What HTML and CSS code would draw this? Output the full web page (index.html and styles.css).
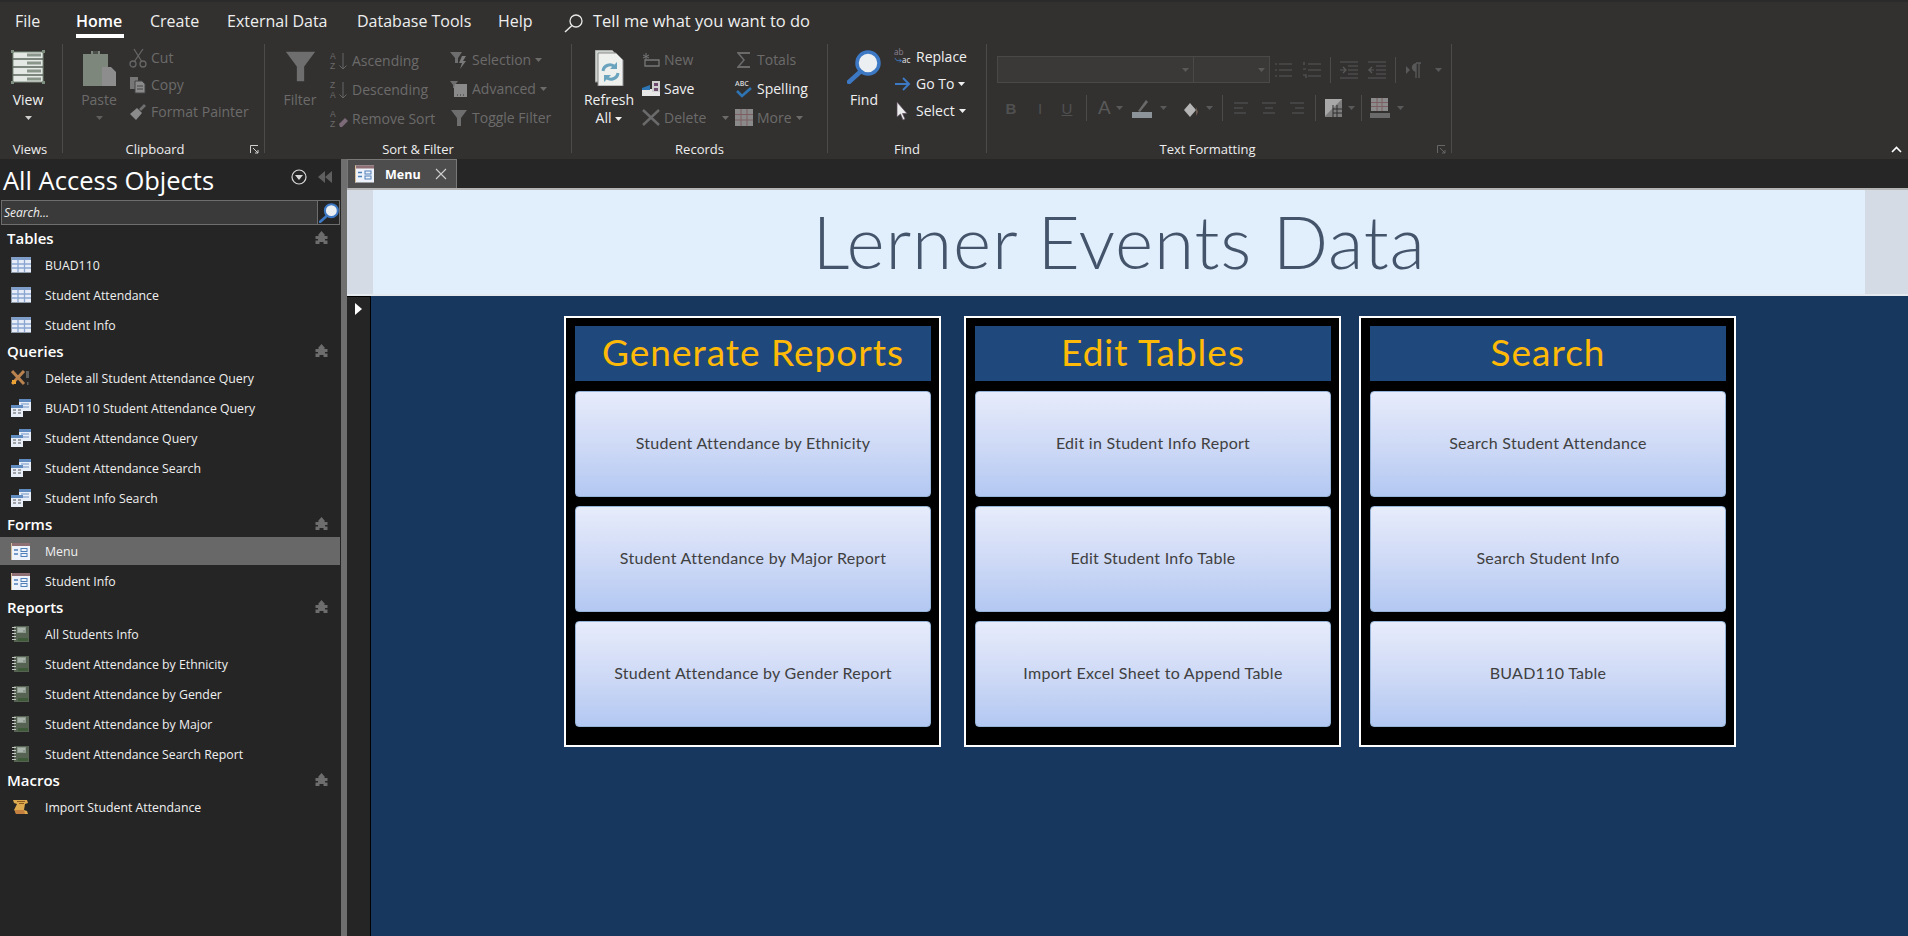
FILE: index.html
```html
<!doctype html>
<html>
  <head>
    <meta charset="utf-8">
    <title>Lerner Events Data</title>
    <link rel="stylesheet" href="styles.css">
  </head>
  <body>
    <svg class="defs" width="0" height="0">
      <symbol id="i-table" viewBox="0 0 20 16">
        <rect x="0" y="0" width="20" height="16" fill="#8f9aa8"/>
        <rect x="1" y="0" width="19" height="15" fill="#e6edf8"/>
        <rect x="1" y="0" width="19" height="3" fill="#7f9fca"/>
        <path d="M1 7h19M1 11h19M7 3v12M13.500 3v12" stroke="#8aa6d0" stroke-width="1.300"/>
      </symbol>
      <symbol id="i-query" viewBox="0 0 20 18">
        <rect x="8" y="0" width="12" height="12" fill="#e8eef8"/>
        <rect x="8" y="0" width="12" height="3" fill="#5f8bc0"/>
        <path d="M10 5h8M10 8h8" stroke="#6f93c4"/>
        <rect x="0" y="6" width="12" height="12" fill="#e8eef8"/>
        <rect x="0" y="6" width="12" height="3" fill="#5f8bc0"/>
        <path d="M2 11h3M7 11h3M2 14h3M7 14h3" stroke="#555"/>
      </symbol>
      <symbol id="i-delete" viewBox="0 0 20 16">
        <path d="M1 1l12 13M13 1L1 14" stroke="#b9824e" stroke-width="3"/>
        <rect x="1" y="10" width="4" height="4" fill="#e9a233"/>
        <path d="M15 1h3v7h-3zM16 12h1.500v3H16z" fill="#5f5f5f"/>
      </symbol>
      <symbol id="i-form" viewBox="0 0 20 17">
        <rect x="0" y="0" width="19" height="17" fill="#eef3fb"/>
        <rect x="0" y="0" width="19" height="3" fill="#8d6f74"/>
        <path d="M.5 0v17" stroke="#d9c09c"/>
        <path d="M3 7h4M3 11h4" stroke="#4f7fb8" stroke-width="1.500"/>
        <rect x="10" y="5.500" width="6" height="3" fill="none" stroke="#4f7fb8"/>
        <rect x="10" y="10.500" width="6" height="3" fill="none" stroke="#4f7fb8"/>
      </symbol>
      <symbol id="i-report" viewBox="0 0 18 16">
        <rect x="2" y="0" width="15" height="16" fill="#566252"/>
        <rect x="5" y="1" width="9" height="6" fill="#8f9b90"/>
        <path d="M6 3h7M6 5h5" stroke="#c5cdc5"/>
        <rect x="6" y="12" width="10" height="3" fill="#3f5a38"/>
        <path d="M0 1.500h4M0 4.500h4M0 7.500h4M0 10.500h4M0 13.500h4" stroke="#c5c5c5"/>
      </symbol>
      <symbol id="i-macro" viewBox="0 0 16 16">
        <path d="M0 1h14l1 3-3 1-1 6 3 1 1 3H3l-1-3-1-1 3-6-3-1z" fill="#dca94f"/>
        <path d="M4 2.500h8M6 4.500h5" stroke="#8c5a1e"/>
        <path d="M2 11h9l1 4H3z" fill="#c4803f"/>
      </symbol>
      <symbol id="i-pin" viewBox="0 0 13 13">
        <path d="M6.500 0L10 4 9 5h3.500v3H10v1.500h2.500V13h-4v-2h-4v2H.5V9.500H3V8H.5V5H4L3 4z" fill="#6d6d6d"/>
      </symbol>
      <symbol id="i-glass" viewBox="0 0 34 34">
        <circle cx="21" cy="13" r="11" fill="#eceff2" stroke="#3c78c3" stroke-width="3.500"/>
        <path d="M13 22L2 32" stroke="#3c78c3" stroke-width="4.500" stroke-linecap="round"/>
      </symbol>
      <symbol id="i-funnel" viewBox="0 0 18 18">
        <path d="M1 1h16l-6 8v8H7V9z" fill="currentColor"/>
      </symbol>
      <symbol id="i-caret" viewBox="0 0 7 4">
        <path d="M0 0h7L3.500 4z" fill="currentColor"/>
      </symbol>
    </svg>

    <header class="ribbon">
      <nav class="tabs">
        <a class="tab tab-file">File</a>
        <a class="tab tab-home">Home</a>
        <a class="tab tab-create">Create</a>
        <a class="tab tab-external">External Data</a>
        <a class="tab tab-db">Database Tools</a>
        <a class="tab tab-help">Help</a>
        <svg class="tell-icon" width="20" height="20" viewBox="0 0 20 20"><circle cx="12" cy="8" r="6" fill="none" stroke="#e8e8e8" stroke-width="1.300"/><path d="M8 12.500L1 19" stroke="#e8e8e8" stroke-width="1.500"/></svg>
        <span class="tell">Tell me what you want to do</span>
      </nav>

      <div class="groups">
        <section class="group group-views">
          <div class="group-body">
            <div class="big big-view">
              <svg width="34" height="34" viewBox="0 0 34 34">
                <path d="M2 2h30v30H2z" fill="#e4e8e4" stroke="#7f8f7f" stroke-width="1"/>
                <rect x="0" y="0" width="3" height="3" fill="#7f8f7f"/><rect x="31" y="0" width="3" height="3" fill="#7f8f7f"/>
                <rect x="0" y="31" width="3" height="3" fill="#7f8f7f"/><rect x="31" y="31" width="3" height="3" fill="#7f8f7f"/>
                <path d="M2 9h30M2 17h30M2 25h30" stroke="#596659" stroke-width="1.500"/>
                <path d="M16 5h14M16 13h14M16 21h14M16 29h14" stroke="#8b968b" stroke-width="3"/>
              </svg>
              <span>View</span>
              <svg class="caret caret-big" width="7" height="4"><use href="#i-caret"/></svg>
            </div>
          </div>
          <div class="group-label">Views</div>
        </section>

        <section class="group group-clip">
          <div class="group-body off">
            <div class="big big-paste">
              <svg width="34" height="36" viewBox="0 0 34 36">
                <path d="M1 4h8V1h9v3h8v33H1z" fill="#7d877b"/>
                <rect x="11" y="1" width="5" height="3" fill="#4b514a"/>
                <path d="M20 17h9l5 5v14H20z" fill="#8d8d8d"/>
              </svg>
              <span>Paste</span>
              <svg class="caret caret-big" width="7" height="4"><use href="#i-caret"/></svg>
            </div>
            <div class="col col-clip">
              <div class="tool">
                <svg width="18" height="20" viewBox="0 0 18 20"><path d="M5 1l8 13M14 1L5 14" stroke="#666" stroke-width="1.300" fill="none"/><circle cx="4" cy="16" r="3" fill="none" stroke="#666" stroke-width="1.300"/><circle cx="14" cy="16" r="3" fill="none" stroke="#666" stroke-width="1.300"/></svg>
                <span>Cut</span>
              </div>
              <div class="tool">
                <svg width="18" height="18" viewBox="0 0 18 18"><path d="M1 1h8v12H1z" fill="#777"/><path d="M6 5h7l3 3v9H6z" fill="#8b8b8b" stroke="#444"/><path d="M8 10h6M8 13h6" stroke="#444"/></svg>
                <span>Copy</span>
              </div>
              <div class="tool">
                <svg width="18" height="18" viewBox="0 0 18 18"><path d="M1 11l7-6 5 5-6 7z" fill="#8b8b8b"/><path d="M10 6l5-5 2 2-5 5z" fill="#6f6f6f"/></svg>
                <span>Format Painter</span>
              </div>
            </div>
          </div>
          <div class="group-label">Clipboard</div>
          <svg class="launcher" width="9" height="9" viewBox="0 0 9 9"><path d="M.5 8V.5H8M3 3l5 5M8 5v3H5" stroke="#cfcfcf" fill="none"/></svg>
        </section>

        <section class="group group-sort">
          <div class="group-body off">
            <div class="big big-filter">
              <svg class="funnel-big" width="33" height="33"><use href="#i-funnel"/></svg>
              <span>Filter</span>
            </div>
            <div class="col col-sort">
              <div class="tool">
                <svg width="18" height="20" viewBox="0 0 18 20"><text x="0" y="8" class="az">A</text><text x="0" y="18" class="az">Z</text><path d="M13 2v16M9.500 14.500L13 18l3.500-3.500" stroke="#666" fill="none"/></svg>
                <span>Ascending</span>
              </div>
              <div class="tool">
                <svg width="18" height="20" viewBox="0 0 18 20"><text x="0" y="8" class="az">Z</text><text x="0" y="18" class="az">A</text><path d="M13 2v16M9.500 14.500L13 18l3.500-3.500" stroke="#666" fill="none"/></svg>
                <span>Descending</span>
              </div>
              <div class="tool">
                <svg width="18" height="20" viewBox="0 0 18 20"><text x="0" y="8" class="az">A</text><text x="0" y="18" class="az">Z</text><path d="M9 15l6-6 3 3-6 6h-2z" fill="#7d6a78"/></svg>
                <span>Remove Sort</span>
              </div>
            </div>
            <div class="col col-sort2">
              <div class="tool">
                <svg width="18" height="18" viewBox="0 0 18 18"><path d="M0 1h12L8 7v5H5V7z" fill="#6e6e6e"/><path d="M12 5h4l-3 5h3l-6 8 2-6H9z" fill="#7a7a7a"/></svg>
                <span>Selection</span><svg class="caret" width="7" height="4"><use href="#i-caret"/></svg>
              </div>
              <div class="tool">
                <svg width="18" height="18" viewBox="0 0 18 18"><path d="M0 1h8L5 5v3H3V5z" fill="#6e6e6e"/><path d="M5 4h12v13H4V8z" fill="#8a8a8a"/><path d="M7 15h1M10 15h1M13 15h1" stroke="#333"/></svg>
                <span>Advanced</span><svg class="caret" width="7" height="4"><use href="#i-caret"/></svg>
              </div>
              <div class="tool">
                <svg class="funnel-small" width="18" height="18"><use href="#i-funnel"/></svg>
                <span>Toggle Filter</span>
              </div>
            </div>
          </div>
          <div class="group-label">Sort &amp; Filter</div>
        </section>

        <section class="group group-records">
          <div class="group-body">
            <div class="big big-refresh">
              <svg width="29" height="36" viewBox="0 0 29 36">
                <path d="M0 0h17l4 4v28H0z" fill="#cfd3cf" stroke="#8a8a8a"/>
                <path d="M3 3h18l7 7v26H3z" fill="#eef0ee" stroke="#8a8a8a"/>
                <path d="M8 21a7 7 0 0 1 12-4M23 23a7 7 0 0 1-12 4" stroke="#6aa3bd" stroke-width="3" fill="none"/>
                <path d="M22 12v7h-7zM9 32v-7h7z" fill="#6aa3bd"/>
              </svg>
              <span>Refresh</span>
              <span>All<svg class="caret caret-on" width="7" height="4"><use href="#i-caret"/></svg></span>
            </div>
            <div class="col col-rec">
              <div class="tool off">
                <svg width="18" height="14" viewBox="0 0 18 14"><path d="M4 0v7M1 2l6 3M7 2L1 5" stroke="#777"/><path d="M3 7h14v6H3z" fill="none" stroke="#777" stroke-width="1.300"/></svg>
                <span>New</span>
              </div>
              <div class="tool">
                <svg width="18" height="15" viewBox="0 0 18 15"><rect x="0" y="8" width="18" height="7" fill="#e6e6e6"/><path d="M0 7l8-3v5H0z" fill="#2e75b6"/><rect x="10" y="0" width="8" height="11" fill="#d0d0d0"/><rect x="12" y="2" width="4" height="3" fill="#6d4a6d"/><rect x="12" y="7" width="4" height="3" fill="#6d4a6d"/></svg>
                <span>Save</span>
              </div>
              <div class="tool off">
                <svg width="18" height="17" viewBox="0 0 18 17"><path d="M1 1l16 15M17 1L1 16" stroke="#6a6a6a" stroke-width="2.500"/></svg>
                <span>Delete</span><svg class="caret caret-gap" width="7" height="4"><use href="#i-caret"/></svg>
              </div>
            </div>
            <div class="col col-rec2">
              <div class="tool off">
                <svg width="18" height="16" viewBox="0 0 18 16"><path d="M15 2V0H2v1l6 7-6 7v1h13v-2H5l5-6-5-6z" fill="#6a6a6a"/></svg>
                <span>Totals</span>
              </div>
              <div class="tool">
                <svg width="18" height="18" viewBox="0 0 18 18"><text x="0" y="6" class="abc">ABC</text><path d="M2 11l5 5 9-8" stroke="#2e75b6" stroke-width="2.500" fill="none"/></svg>
                <span>Spelling</span>
              </div>
              <div class="tool off">
                <svg width="18" height="17" viewBox="0 0 18 17"><rect width="18" height="17" fill="#8a8a8a"/><path d="M0 5.500h18M0 11h18M6 0v17M12 0v17" stroke="#7d5f63"/></svg>
                <span>More</span><svg class="caret" width="7" height="4"><use href="#i-caret"/></svg>
              </div>
            </div>
          </div>
          <div class="group-label">Records</div>
        </section>

        <section class="group group-find">
          <div class="group-body">
            <div class="big big-find">
              <svg width="34" height="34"><use href="#i-glass"/></svg>
              <span>Find</span>
            </div>
            <div class="col col-find">
              <div class="tool">
                <svg width="20" height="18" viewBox="0 0 20 18"><text x="0" y="7" class="ab">ab</text><text x="9" y="16" class="ab ab-on">ac</text><path d="M1 10l2 3h5M6 11l2 2-2 2" stroke="#3c78c3" fill="none"/></svg>
                <span>Replace</span>
              </div>
              <div class="tool">
                <svg width="18" height="14" viewBox="0 0 18 14"><path d="M1 7h14M9 1l6 6-6 6" stroke="#3c78c3" stroke-width="2" fill="none"/></svg>
                <span>Go To</span><svg class="caret caret-on" width="7" height="4"><use href="#i-caret"/></svg>
              </div>
              <div class="tool">
                <svg width="18" height="18" viewBox="0 0 18 18"><path d="M3 0v15l3.500-3 2.500 6 2-1-2.500-5.500H13z" fill="#ececec" stroke="#5a4a5a" stroke-width=".7"/></svg>
                <span>Select</span><svg class="caret caret-on" width="7" height="4"><use href="#i-caret"/></svg>
              </div>
            </div>
          </div>
          <div class="group-label">Find</div>
        </section>

        <section class="group group-text">
          <div class="group-body fmt">
            <div class="fmt-row fmt-top">
              <div class="combo combo-font"><svg class="caret" width="7" height="4"><use href="#i-caret"/></svg></div>
              <div class="combo combo-size"><svg class="caret" width="7" height="4"><use href="#i-caret"/></svg></div>
              <svg class="glyph g-list" width="18" height="18" viewBox="0 0 18 18"><path d="M4 3h13M4 9h13M4 15h13M0 3h2M0 9h2M0 15h2" stroke="#595959" stroke-width="1.200"/></svg>
              <svg class="glyph g-list2" width="18" height="18" viewBox="0 0 18 18"><path d="M5 3h13M5 9h13M5 15h13M1 1v3M0 8h3M0 14h3v3" stroke="#595959" stroke-width="1.200" fill="none"/></svg>
              <i class="sep sep-a"></i>
              <svg class="glyph g-in" width="18" height="18" viewBox="0 0 18 18"><path d="M0 1h18M8 5h10M8 9h10M8 13h10M0 17h18M0 9h6M3 6l3 3-3 3" stroke="#595959" stroke-width="1.200" fill="none"/></svg>
              <svg class="glyph g-out" width="18" height="18" viewBox="0 0 18 18"><path d="M0 1h18M8 5h10M8 9h10M8 13h10M0 17h18M0 9h6M4 6L1 9l3 3" stroke="#595959" stroke-width="1.200" fill="none"/></svg>
              <i class="sep sep-b"></i>
              <svg class="glyph g-para" width="16" height="16" viewBox="0 0 16 16"><path d="M0 4l4 4-4 4z" fill="#595959"/><path d="M10 1h5M10 1v15M13 1v15M10 2a3 3 0 0 0 0 7" stroke="#595959" stroke-width="1.300" fill="#595959"/></svg>
              <svg class="caret caret-para" width="7" height="4"><use href="#i-caret"/></svg>
            </div>
            <div class="fmt-row fmt-bottom">
              <b class="letter l-b">B</b>
              <em class="letter l-i">I</em>
              <u class="letter l-u">U</u>
              <i class="sep sep-c"></i>
              <span class="letter l-a">A</span>
              <svg class="caret caret-a" width="7" height="4"><use href="#i-caret"/></svg>
              <svg class="glyph g-hl" width="20" height="20" viewBox="0 0 20 20"><path d="M6 13L14 2l2 2-8 10z" fill="#6a6a6a"/><rect y="14" width="20" height="6" fill="#8d9499"/></svg>
              <svg class="caret caret-hl" width="7" height="4"><use href="#i-caret"/></svg>
              <svg class="glyph g-fill" width="16" height="19" viewBox="0 0 16 19"><path d="M8 4l6 7-6 7-6-7z" fill="#b5b5b5"/><path d="M14 8l2 5-2 4z" fill="#6a5a50"/></svg>
              <svg class="caret caret-fill" width="7" height="4"><use href="#i-caret"/></svg>
              <i class="sep sep-d"></i>
              <svg class="glyph g-al" width="14" height="12" viewBox="0 0 14 12"><path d="M0 1h14M0 6h9M0 11h12" stroke="#595959" stroke-width="1.200"/></svg>
              <svg class="glyph g-al2" width="14" height="12" viewBox="0 0 14 12"><path d="M0 1h14M3 6h8M1 11h12" stroke="#595959" stroke-width="1.200"/></svg>
              <svg class="glyph g-al3" width="14" height="12" viewBox="0 0 14 12"><path d="M0 1h14M5 6h9M2 11h12" stroke="#595959" stroke-width="1.200"/></svg>
              <i class="sep sep-e"></i>
              <svg class="glyph g-grid" width="17" height="18" viewBox="0 0 17 18"><path d="M0 0h17v18H0z" fill="#7d7d7d"/><path d="M17 0L0 17V0z" fill="#a8a8a8"/><path d="M8 10h9M8 14h9M8 6v12M12 6v12" stroke="#2f2f2f"/></svg>
              <svg class="caret caret-grid" width="7" height="4"><use href="#i-caret"/></svg>
              <i class="sep sep-f"></i>
              <svg class="glyph g-alt" width="20" height="20" viewBox="0 0 20 20"><rect x="1" y="0" width="17" height="13" fill="#8b8b8b"/><path d="M1 4.500h17M1 8.500h17M7 0v13M12 0v13" stroke="#7d5f63"/><rect y="15" width="20" height="5" fill="#6a6a6a"/></svg>
              <svg class="caret caret-alt" width="7" height="4"><use href="#i-caret"/></svg>
            </div>
          </div>
          <div class="group-label">Text Formatting</div>
          <svg class="launcher launcher-dim" width="9" height="9" viewBox="0 0 9 9"><path d="M.5 8V.5H8M3 3l5 5M8 5v3H5" stroke="#666" fill="none"/></svg>
        </section>
      </div>

      <svg class="collapse" width="11" height="7" viewBox="0 0 11 7"><path d="M1 6l4.500-4.500L10 6" stroke="#fff" stroke-width="1.600" fill="none"/></svg>
    </header>

    <div class="work">
      <aside class="nav">
        <div class="nav-title">
          <h1>All Access Objects</h1>
          <svg class="nav-drop" width="16" height="16" viewBox="0 0 16 16"><circle cx="8" cy="8" r="7" fill="none" stroke="#d8d8d8" stroke-width="1.200"/><path d="M4 6h8l-4 5z" fill="#d8d8d8"/></svg>
          <svg class="nav-shut" width="14" height="12" viewBox="0 0 14 12"><path d="M7 0v12L0 6zM14 0v12L7 6z" fill="#5f5f5f"/></svg>
        </div>
        <div class="nav-search">
          <span>Search...</span>
          <div class="nav-search-btn"><svg width="20" height="20"><use href="#i-glass"/></svg></div>
        </div>

        <h2 class="nav-head">Tables<svg width="13" height="13"><use href="#i-pin"/></svg></h2>
        <ul>
          <li><svg width="20" height="16"><use href="#i-table"/></svg>BUAD110</li>
          <li><svg width="20" height="16"><use href="#i-table"/></svg>Student Attendance</li>
          <li><svg width="20" height="16"><use href="#i-table"/></svg>Student Info</li>
        </ul>

        <h2 class="nav-head">Queries<svg width="13" height="13"><use href="#i-pin"/></svg></h2>
        <ul>
          <li><svg width="20" height="16"><use href="#i-delete"/></svg>Delete all Student Attendance Query</li>
          <li><svg width="20" height="18"><use href="#i-query"/></svg>BUAD110 Student Attendance Query</li>
          <li><svg width="20" height="18"><use href="#i-query"/></svg>Student Attendance Query</li>
          <li><svg width="20" height="18"><use href="#i-query"/></svg>Student Attendance Search</li>
          <li><svg width="20" height="18"><use href="#i-query"/></svg>Student Info Search</li>
        </ul>

        <h2 class="nav-head">Forms<svg width="13" height="13"><use href="#i-pin"/></svg></h2>
        <ul>
          <li class="current"><svg width="20" height="17"><use href="#i-form"/></svg>Menu</li>
          <li><svg width="20" height="17"><use href="#i-form"/></svg>Student Info</li>
        </ul>

        <h2 class="nav-head">Reports<svg width="13" height="13"><use href="#i-pin"/></svg></h2>
        <ul>
          <li><svg width="18" height="16"><use href="#i-report"/></svg>All Students Info</li>
          <li><svg width="18" height="16"><use href="#i-report"/></svg>Student Attendance by Ethnicity</li>
          <li><svg width="18" height="16"><use href="#i-report"/></svg>Student Attendance by Gender</li>
          <li><svg width="18" height="16"><use href="#i-report"/></svg>Student Attendance by Major</li>
          <li><svg width="18" height="16"><use href="#i-report"/></svg>Student Attendance Search Report</li>
        </ul>

        <h2 class="nav-head">Macros<svg width="13" height="13"><use href="#i-pin"/></svg></h2>
        <ul>
          <li><svg width="16" height="16"><use href="#i-macro"/></svg>Import Student Attendance</li>
        </ul>
      </aside>

      <div class="splitter"></div>

      <main class="doc">
        <div class="doc-tabs">
          <div class="doc-tab">
            <svg width="20" height="18"><use href="#i-form"/></svg>
            <span>Menu</span>
            <svg class="doc-close" width="12" height="12" viewBox="0 0 12 12"><path d="M1 1l10 10M11 1L1 11" stroke="#d0d0d0" stroke-width="1.100"/></svg>
          </div>
        </div>

        <div class="form-header">
          <div class="form-title">Lerner Events Data</div>
        </div>

        <div class="form-detail">
          <div class="selector"><svg width="7" height="12" viewBox="0 0 7 12"><path d="M0 0l7 6-7 6z" fill="#fff"/></svg></div>
          <div class="canvas">
            <section class="panel">
              <h2>Generate Reports</h2>
              <button>Student Attendance by Ethnicity</button>
              <button>Student Attendance by Major Report</button>
              <button>Student Attendance by Gender Report</button>
            </section>
            <section class="panel panel-edit">
              <h2>Edit Tables</h2>
              <button>Edit in Student Info Report</button>
              <button>Edit Student Info Table</button>
              <button>Import Excel Sheet to Append Table</button>
            </section>
            <section class="panel panel-search">
              <h2>Search</h2>
              <button>Search Student Attendance</button>
              <button>Search Student Info</button>
              <button>BUAD110 Table</button>
            </section>
          </div>
        </div>
      </main>
    </div>
  </body>
</html>
```

FILE: styles.css
```css
* {
  box-sizing: border-box;
}

html, body {
  margin: 0;
  height: 100%;
  overflow: hidden;
}

body {
  display: flex;
  flex-direction: column;
  background: #252525;
  color: #f0f0f0;
  font-family: "Open Sans", "Noto Sans", sans-serif;
  font-size: 13px;
}

.defs {
  position: absolute;
}

/* ribbon */

.ribbon {
  position: relative;
  height: 159px;
  flex: none;
  background: #323130;
  border-top: 2px solid #2a2a2a;
}

.tabs {
  display: flex;
  align-items: flex-start;
  height: 36px;
  font-size: 16px;
  color: #eeeeee;
}

.tab {
  height: 36px;
  line-height: 38px;
  white-space: nowrap;
}

.tab-file { margin-left: 15px; width: 61px; }
.tab-home { width: 74px; }
.tab-home { font-weight: 600; color: #fff; position: relative; }
.tab-home::after {
  content: "";
  position: absolute;
  left: 0;
  bottom: 0;
  width: 48px;
  height: 4px;
  background: #fff;
}
.tab-create { width: 77px; }
.tab-external { width: 130px; }
.tab-db { width: 141px; }
.tab-help { width: 66px; }

.tell-icon {
  margin-top: 11px;
  flex: none;
}

.tell {
  margin-left: 9px;
  line-height: 38px;
  font-size: 16.500px;
}

.groups {
  display: flex;
  padding-top: 6px;
}

.group {
  position: relative;
  display: flex;
  flex-direction: column;
  height: 109px;
  border-right: 1px solid #4c4b4a;
}

.group-views { width: 63px; }
.group-clip { width: 202px; }
.group-sort { width: 307px; }
.group-records { width: 256px; }
.group-find { width: 159px; }
.group-text { width: 465px; }

.group-body {
  display: flex;
  flex: 1;
  align-items: flex-start;
}

.group-label {
  height: 18px;
  line-height: 28px;
  text-align: center;
  font-size: 13px;
  color: #eeeeee;
}

.group-views .group-label { padding-right: 2px; }
.group-clip .group-label { padding-right: 17px; }
.group-text .group-label { padding-right: 23px; }

.launcher {
  position: absolute;
  right: 5px;
  bottom: -1px;
}

.off {
  color: #6c6b6a;
}

.big {
  display: flex;
  flex-direction: column;
  align-items: center;
  padding-top: 6px;
  line-height: 18px;
  font-size: 14px;
  white-space: nowrap;
}

.big > svg:first-child {
  margin-bottom: 5px;
}

.big-view { width: 56px; }
.big-paste { width: 34px; margin-left: 19px; }
.big-filter { width: 40px; margin-left: 15px; }
.big-refresh { width: 56px; margin-left: 9px; }
.big-find { width: 40px; margin-left: 16px; }

.big-view > svg:first-child { margin-bottom: 7px; }
.big-paste > svg:first-child { margin-bottom: 5px; }
.big-filter > svg:first-child { margin-bottom: 8px; }
.big-find > svg:first-child { margin-bottom: 7px; }

.big-refresh .caret { vertical-align: middle; }

.funnel-big { color: #6e6e6e; }
.funnel-small { color: #6e6e6e; }

.col {
  display: flex;
  flex-direction: column;
  flex: none;
}

.tool {
  display: flex;
  align-items: center;
  height: 29px;
  font-size: 14px;
  white-space: nowrap;
}

.tool svg:first-child {
  width: 18px;
  margin-right: 4px;
  flex: none;
  overflow: visible;
}

.col-clip { margin-left: 13px; }
.col-clip .tool { height: 27px; }

.col-sort { width: 120px; margin-left: 10px; padding-top: 2px; }
.col-sort2 { padding-top: 1px; }

.col-rec { width: 93px; margin-left: 5px; padding-top: 1px; }
.col-rec2 { padding-top: 1px; }

.col-find { margin-left: 10px; margin-top: -1px; }
.col-find .tool { height: 27px; }

.caret {
  color: #6c6b6a;
  margin-left: 4px;
  flex: none;
}

.caret-on { color: #f0f0f0; }
.caret-big { margin: 7px 0 0; color: inherit; }
.big-view .caret-big { color: #cfcfcf; }
.big-paste .caret-big { color: #5f5e5d; }
.caret-gap { margin-left: 16px; }

.az {
  font: 8.500px "Liberation Sans", sans-serif;
  fill: #6c6b6a;
}

.abc {
  font: 600 7px "Open Sans", sans-serif;
  fill: #d8d8d8;
}

.ab {
  font: 9px "Open Sans", sans-serif;
  fill: #8d8296;
}

.ab-on {
  fill: #e8e8e8;
}

/* text formatting group, everything in it is disabled */

.fmt {
  flex-direction: column;
}

.fmt-row {
  display: flex;
  align-items: center;
  flex: none;
}

.fmt-top {
  height: 27px;
  margin: 12px 0 0 10px;
}

.fmt-bottom {
  height: 26px;
  margin: 12px 0 0 18px;
}

.combo {
  display: flex;
  align-items: center;
  justify-content: flex-end;
  height: 27px;
  padding-right: 4px;
  background: #3a3938;
  border: 1px solid #4a4948;
}

.combo .caret { color: #5a5958; }
.combo-font { width: 197px; }
.combo-size { width: 76px; border-left: 0; }

.glyph { flex: none; }

.sep {
  display: block;
  width: 1px;
  height: 26px;
  background: #4c4b4a;
  flex: none;
}

.g-list { margin-left: 5px; }
.g-list2 { margin-left: 10px; }
.sep-a { margin-left: 9px; }
.g-in { margin-left: 9px; }
.g-out { margin-left: 10px; }
.sep-b { margin-left: 9px; }
.g-para { margin-left: 10px; }
.caret-para { margin-left: 13px; color: #595959; }

.letter {
  font: 15px "Liberation Sans", sans-serif;
  color: #505050;
  width: 12px;
  text-align: center;
  flex: none;
}

.l-b { font-weight: 700; }
.l-i { margin-left: 17px; }
.l-u { margin-left: 15px; }
.sep-c { margin-left: 13px; }
.l-a { margin-left: 11px; font-size: 19px; color: #595959; }
.caret-a { margin-left: 6px; color: #595959; }
.g-hl { margin-left: 9px; }
.caret-hl { margin-left: 8px; color: #595959; }
.g-fill { margin-left: 15px; }
.caret-fill { margin-left: 8px; color: #595959; }
.sep-d { margin-left: 9px; }
.g-al { margin-left: 11px; }
.g-al2 { margin-left: 14px; }
.g-al3 { margin-left: 14px; }
.sep-e { margin-left: 11px; }
.g-grid { margin-left: 9px; }
.caret-grid { margin-left: 6px; color: #595959; }
.sep-f { margin-left: 6px; }
.g-alt { margin-left: 8px; }
.caret-alt { margin-left: 7px; color: #595959; }

.collapse {
  position: absolute;
  right: 6px;
  bottom: 6px;
}

/* navigation pane */

.work {
  display: flex;
  flex: 1;
  min-height: 0;
}

.nav {
  width: 341px;
  flex: none;
  background: #252525;
}

.nav-title {
  display: flex;
  align-items: center;
  height: 41px;
  padding-left: 3px;
}

.nav-title h1 {
  margin: 2px 0 0;
  font-size: 25.500px;
  font-weight: 400;
  color: #fff;
  line-height: 41px;
  flex: 1;
}

.nav-drop { margin-right: 11px; margin-top: -6px; }
.nav-shut { margin-right: 9px; margin-top: -5px; }

.nav-search {
  display: flex;
  align-items: center;
  justify-content: space-between;
  width: 339px;
  height: 25px;
  margin-left: 1px;
  padding-left: 2px;
  background: #3a3a3a;
  border: 1px solid #6e6e6e;
  font-size: 12px;
  font-style: italic;
}

.nav-search span {
  margin-top: -1px;
}

.nav-search-btn {
  display: flex;
  align-items: center;
  justify-content: center;
  width: 22px;
  height: 23px;
  background: #252525;
  border-left: 1px solid #6e6e6e;
}

.nav-head {
  display: flex;
  align-items: center;
  justify-content: space-between;
  height: 23px;
  margin: 0;
  padding: 0 13px 2px 7px;
  font-size: 15px;
  font-weight: 600;
  color: #fff;
}

.nav-search + .nav-head {
  margin-top: 2px;
}

.nav ul {
  margin: 0;
  padding: 0;
  list-style: none;
}

.nav li {
  display: flex;
  align-items: center;
  height: 30px;
  padding-left: 11px;
  font-size: 12.300px;
  white-space: nowrap;
  border-top: 1px solid transparent;
  border-bottom: 1px solid transparent;
  background-clip: padding-box;
}

.nav li svg {
  width: 20px;
  margin-right: 14px;
  flex: none;
}

.nav li.current {
  background-color: #686868;
  margin-right: 1px;
}

.splitter {
  width: 6px;
  flex: none;
  background: #6f6f6f;
}

/* document area */

.doc {
  display: flex;
  flex-direction: column;
  flex: 1;
  min-width: 0;
}

.doc-tabs {
  height: 31px;
  flex: none;
  background: #262626;
  border-bottom: 2px solid #b4b4b4;
}

.doc-tab {
  display: flex;
  align-items: center;
  width: 110px;
  height: 29px;
  padding-left: 7px;
  background: #4d4d4d;
  border: 1px solid #787878;
  border-bottom: 0;
  font-size: 12.500px;
  font-weight: 700;
  color: #fff;
}

.doc-tab span {
  margin-left: 10px;
}

.doc-close {
  margin-left: 14px;
}

.form-header {
  height: 106px;
  flex: none;
  padding: 0 43px 0 26px;
  background: #d5dbe5;
  border-bottom: 2px solid #e4e8ef;
}

.form-title {
  height: 104px;
  padding-top: 1px;
  background: #e1eefc;
  text-align: center;
  color: #44546a;
  font-family: Lato, sans-serif;
  font-weight: 300;
  font-size: 73px;
  letter-spacing: 0.800px;
  line-height: 100px;
}

.form-detail {
  display: flex;
  flex: 1;
  min-height: 0;
}

.selector {
  width: 24px;
  flex: none;
  padding: 4px 0 0 8px;
  background: #252525;
  border-right: 1px solid #000;
  border-top: 1px solid #000;
}

.canvas {
  display: flex;
  align-items: flex-start;
  flex: 1;
  padding: 20px 0 0 193px;
  background: #17375e;
}

.panel {
  display: flex;
  flex-direction: column;
  width: 377px;
  height: 431px;
  padding: 8px 8px 8px 9px;
  background: #000;
  border: 2px solid #fff;
}

.panel-edit { margin-left: 23px; }
.panel-search { margin-left: 18px; }

.panel h2 {
  height: 55px;
  margin: 0 0 10px;
  background: #1f497d;
  color: #ffba08;
  text-align: center;
  font-family: Lato, sans-serif;
  font-weight: 400;
  font-size: 37px;
  letter-spacing: 1px;
  line-height: 52px;
}

.panel button {
  height: 106px;
  margin-bottom: 9px;
  padding: 0 0 3px;
  background: linear-gradient(#e7ecfb, #cfdaf6 50%, #b3c8f2);
  border: 1px solid #95b3d7;
  border-radius: 4px;
  color: #404040;
  font-family: Lato, sans-serif;
  font-size: 16px;
  letter-spacing: 0.280px;
}
```
